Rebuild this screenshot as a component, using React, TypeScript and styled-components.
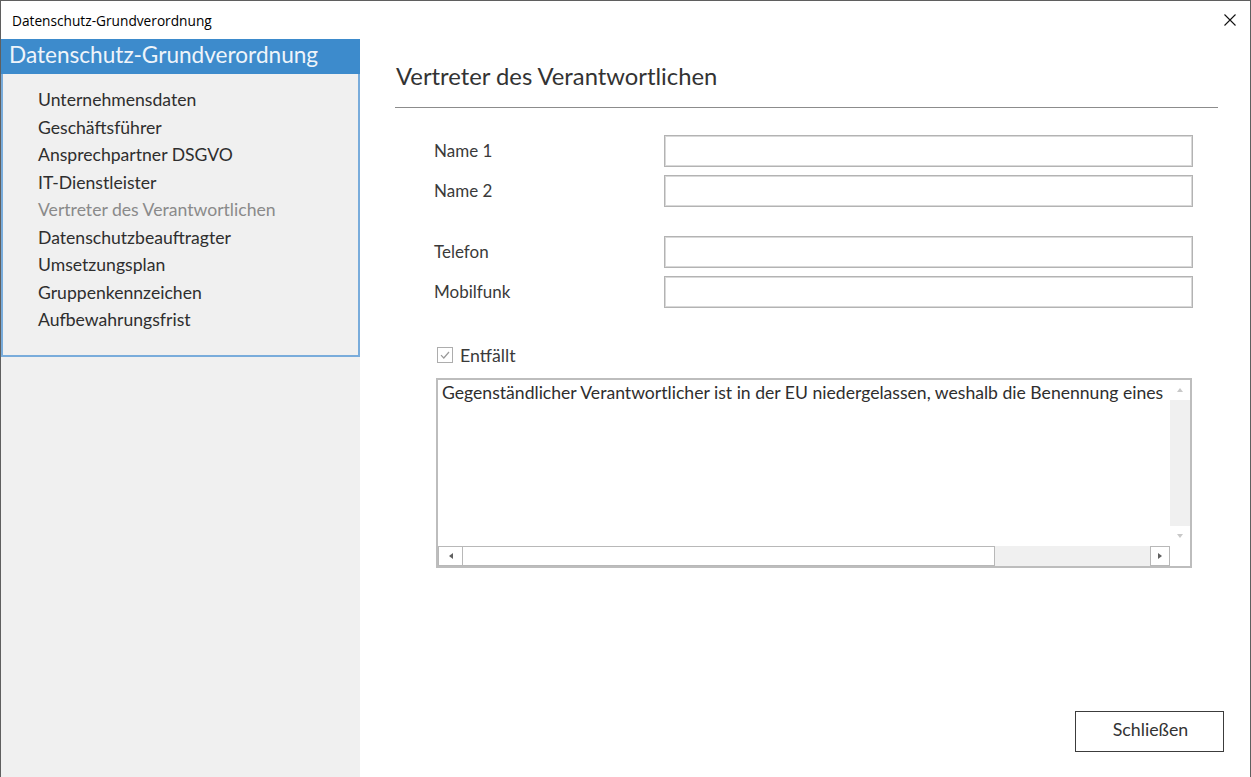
import React from "react";
import styled, { createGlobalStyle } from "styled-components";

const Global = createGlobalStyle`
  html, body { margin: 0; padding: 0; background: #fff; }
  * { box-sizing: border-box; }
`;

const FONT = `"Lato", "Open Sans", sans-serif`;

const Window = styled.div`
  width: 1251px;
  height: 777px;
  display: flex;
  flex-direction: column;
  border: 1px solid #5f5f5f;
  border-bottom: none;
  background: #fff;
  font-family: ${FONT};
  overflow: hidden;
`;

const TitleBar = styled.div`
  height: 38px;
  flex: none;
  display: flex;
  align-items: center;
  justify-content: space-between;
  padding: 0 14px 0 11px;
  font-family: "Open Sans", "Noto Sans", sans-serif;
  font-size: 13.7px;
  color: #000;
`;

const CloseIcon = styled.svg`
  width: 12px;
  height: 12px;
  display: block;
`;

const Body = styled.div`
  flex: 1;
  display: flex;
  min-height: 0;
`;

const Sidebar = styled.aside`
  width: 359px;
  flex: none;
  background: #f0f0f0;
  display: flex;
  flex-direction: column;
`;

const SidebarHeader = styled.div`
  height: 35px;
  background: #3d8bcc;
  color: #eef4fa;
  font-size: 22.6px;
  padding: 0 0 5px 8px;
  display: flex;
  align-items: center;
  white-space: nowrap;
`;

const NavBox = styled.nav`
  height: 283px;
  border: 2px solid #79acdb;
  border-top: none;
  padding: 12px 0 0 35px;
  display: flex;
  flex-direction: column;
`;

const NavItem = styled.div<{ $active?: boolean }>`
  height: 27.5px;
  display: flex;
  align-items: center;
  font-size: 17.6px;
  color: ${(p) => (p.$active ? "#8a8a8a" : "#2e2e2e")};
  white-space: nowrap;
`;

const Main = styled.main`
  flex: 1;
  display: flex;
  flex-direction: column;
  padding: 0 32px 24px 35px;
`;

const PageTitle = styled.h1`
  margin: 0;
  padding: 6px 0 0 1px;
  height: 68px;
  font-size: 23.8px;
  font-weight: 400;
  color: #333;
  display: flex;
  align-items: center;
  white-space: nowrap;
`;

const Divider = styled.hr`
  margin: 0;
  border: none;
  border-top: 1px solid #8c8c8c;
`;

const Form = styled.div`
  padding: 27px 0 0 39px;
  display: flex;
  flex-direction: column;
`;

const FieldGroup = styled.div`
  display: grid;
  grid-template-columns: 230px 529px;
  row-gap: 8px;
  margin-bottom: 29px;
`;

const Label = styled.label`
  font-size: 17px;
  color: #3a3a3a;
  display: flex;
  align-items: center;
  height: 32px;
  padding-bottom: 1px;
  white-space: nowrap;
`;

const Input = styled.div`
  height: 32px;
  border: 1px solid #b3b3b3;
  box-shadow: inset 0 0 0 1px #d9d9d9;
  background: #fff;
`;

const CheckRow = styled.div`
  display: flex;
  align-items: center;
  gap: 7px;
  margin: 7px 0 0 3px;
  height: 22px;
  font-size: 17.8px;
  color: #3a3a3a;
`;

const CheckBox = styled.span`
  width: 16px;
  height: 16px;
  border: 1px solid #adadad;
  background: #fff;
  display: flex;
  align-items: center;
  justify-content: center;
`;

const TextArea = styled.div`
  margin: 12px 0 0 2px;
  width: 756px;
  height: 190px;
  border: 2px solid #bdbdbd;
  display: grid;
  grid-template-columns: 1fr 20px;
  grid-template-rows: 1fr 20px;
  background: #fff;
`;

const TextContent = styled.div`
  padding: 2px 0 0 4px;
  font-size: 17.6px;
  color: #2e2e2e;
  white-space: nowrap;
  overflow: hidden;
`;

const VScroll = styled.div`
  background: #f0f0f0;
  display: flex;
  flex-direction: column;
  justify-content: space-between;
`;

const ArrowBtn = styled.div<{ $bordered?: boolean; $wide?: boolean }>`
  width: ${(p) => (p.$wide ? "25px" : "20px")};
  height: 20px;
  background: #fff;
  display: flex;
  align-items: center;
  justify-content: center;
  border: ${(p) => (p.$bordered ? "1px solid #b8b8b8" : "none")};
`;

const HScroll = styled.div`
  background: #f0f0f0;
  display: flex;
  align-items: stretch;
`;

const HThumb = styled.div`
  width: 532px;
  background: #fff;
  border: 1px solid #b8b8b8;
  border-left: none;
`;

const Spacer = styled.div`
  flex: 1;
`;

const Corner = styled.div`
  background: #fff;
`;

const Footer = styled.div`
  margin-top: auto;
  display: flex;
  justify-content: flex-end;
  margin-right: -6px;
  margin-bottom: 1px;
`;

const Button = styled.button`
  width: 149px;
  height: 41px;
  background: #fff;
  border: 1px solid #3c3c3c;
  font-family: ${FONT};
  font-size: 17.8px;
  color: #333;
  padding: 0 0 5px 2px;
`;

const Tri: React.FC<{ dir: "up" | "down" | "left" | "right"; color?: string }> = ({ dir, color = "#c8c8c8" }) => {
  const pts = {
    up: "1,6 4,2 7,6",
    down: "1,2 4,6 7,2",
    left: "6,1 2,4 6,7",
    right: "2,1 6,4 2,7",
  }[dir];
  return (
    <svg width="8" height="8" viewBox="0 0 8 8">
      <polygon points={pts} fill={color} />
    </svg>
  );
};

const navItems = [
  "Unternehmensdaten",
  "Geschäftsführer",
  "Ansprechpartner DSGVO",
  "IT-Dienstleister",
  "Vertreter des Verantwortlichen",
  "Datenschutzbeauftragter",
  "Umsetzungsplan",
  "Gruppenkennzeichen",
  "Aufbewahrungsfrist",
];

export default function App() {
  return (
    <>
      <Global />
      <Window>
        <TitleBar>
          <span>Datenschutz-Grundverordnung</span>
          <CloseIcon viewBox="0 0 12 12">
            <path d="M0.5 0.5 L11.5 11.5 M11.5 0.5 L0.5 11.5" stroke="#111" strokeWidth="1.1" fill="none" />
          </CloseIcon>
        </TitleBar>
        <Body>
          <Sidebar>
            <SidebarHeader>Datenschutz-Grundverordnung</SidebarHeader>
            <NavBox>
              {navItems.map((n) => (
                <NavItem key={n} $active={n === "Vertreter des Verantwortlichen"}>
                  {n}
                </NavItem>
              ))}
            </NavBox>
          </Sidebar>
          <Main>
            <PageTitle>Vertreter des Verantwortlichen</PageTitle>
            <Divider />
            <Form>
              <FieldGroup>
                <Label>Name 1</Label>
                <Input />
                <Label>Name 2</Label>
                <Input />
              </FieldGroup>
              <FieldGroup>
                <Label>Telefon</Label>
                <Input />
                <Label>Mobilfunk</Label>
                <Input />
              </FieldGroup>
              <CheckRow>
                <CheckBox>
                  <svg width="12" height="12" viewBox="0 0 12 12">
                    <path d="M2 6.2 L4.8 9 L10 3" stroke="#9a9a9a" strokeWidth="1.2" fill="none" />
                  </svg>
                </CheckBox>
                Entfällt
              </CheckRow>
              <TextArea>
                <TextContent>
                  Gegenständlicher Verantwortlicher ist in der EU niedergelassen, weshalb die Benennung eines
                </TextContent>
                <VScroll>
                  <ArrowBtn><Tri dir="up" /></ArrowBtn>
                  <ArrowBtn><Tri dir="down" /></ArrowBtn>
                </VScroll>
                <HScroll>
                  <ArrowBtn $bordered $wide><Tri dir="left" color="#606060" /></ArrowBtn>
                  <HThumb />
                  <Spacer />
                  <ArrowBtn $bordered><Tri dir="right" color="#606060" /></ArrowBtn>
                </HScroll>
                <Corner />
              </TextArea>
            </Form>
            <Footer>
              <Button>Schließen</Button>
            </Footer>
          </Main>
        </Body>
      </Window>
    </>
  );
}
